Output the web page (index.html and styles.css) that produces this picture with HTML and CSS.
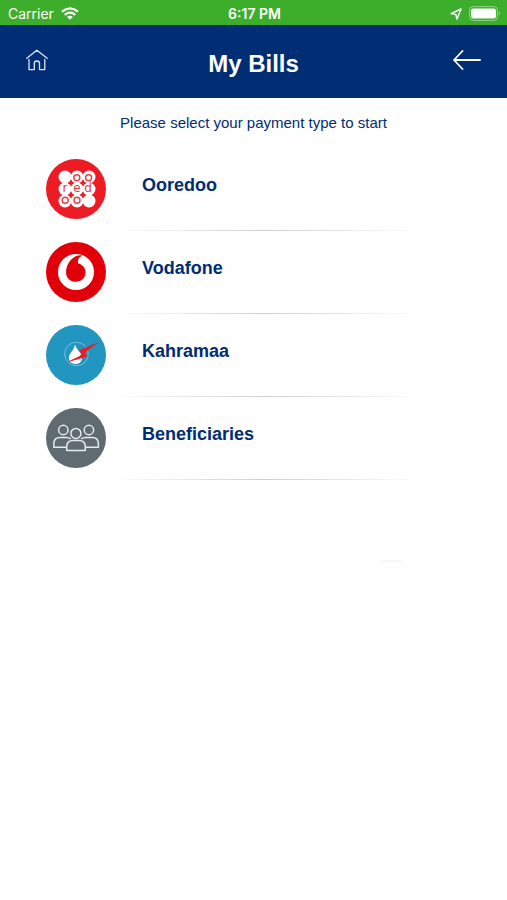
FILE: index.html
```html
<!DOCTYPE html>
<html lang="en">
<head>
<meta charset="utf-8">
<meta name="viewport" content="width=device-width, initial-scale=1">
<title>My Bills</title>
<link rel="stylesheet" href="styles.css">
</head>
<body>
<div class="status">
  <div class="status-left">
    <span>Carrier</span>
    <svg width="18" height="13" viewBox="0 0 18 13" fill="none" stroke="#fff" stroke-width="2.2" aria-hidden="true">
      <path d="M1 4.7Q9-1.8 17 4.7M3.7 7.8Q9 3.6 14.3 7.8"/>
      <path d="M6.1 9.8Q9 7.7 11.9 9.8L9 12.8Z" fill="#fff" stroke="none"/>
    </svg>
  </div>
  <span class="status-time">6:17 PM</span>
  <div class="status-right">
    <svg width="12" height="12" viewBox="0 0 12 12" fill="none" stroke="#fff" stroke-width="1.4" stroke-linejoin="round" aria-hidden="true">
      <path d="M11 1L1 5.6L5.8 6.4L7 11Z"/>
    </svg>
    <svg width="32" height="15" viewBox="0 0 32 15" aria-hidden="true">
      <rect x="0.6" y="0.6" width="27.8" height="13.8" rx="3.6" fill="none" stroke="#fff" stroke-opacity="0.45"/>
      <rect x="2" y="2.5" width="25" height="10" rx="2.2" fill="#fff"/>
      <path d="M30 5.3Q32 7.5 30 9.7Z" fill="#fff" fill-opacity="0.5"/>
    </svg>
  </div>
</div>
<header class="header">
  <button class="icon-button" type="button" aria-label="Home">
    <svg width="22" height="22" viewBox="0 0 22 22" fill="none" stroke="#dce6f8" stroke-width="1.3" stroke-linecap="round" stroke-linejoin="round" aria-hidden="true">
      <path d="M0.8 9.3L10.8 1.2L21.2 9.3M3 10.4V20.6H8.3V14.2Q8.3 12 10.9 12Q13.5 12 13.5 14.2V20.6H18.8V10.4"/>
    </svg>
  </button>
  <h1 class="title">My Bills</h1>
  <button class="icon-button icon-button-end" type="button" aria-label="Back">
    <svg width="28" height="20" viewBox="0 0 28 20" fill="none" stroke="#fff" stroke-width="1.8" stroke-linecap="round" stroke-linejoin="round" aria-hidden="true">
      <path d="M27 10H1M9.5 1L1 10L9.5 19"/>
    </svg>
  </button>
</header>
<main>
  <p class="hint">Please select your payment type to start</p>
  <ul class="bills">
    <li>
      <a class="bill" href="#ooredoo">
        <svg class="logo" viewBox="0 0 60 60" aria-hidden="true">
          <circle cx="30" cy="30" r="30" fill="#ed1c24"/>
          <g fill="#fff">
            <circle cx="19" cy="18" r="6.5"/><circle cx="31" cy="18" r="6.5"/><circle cx="43" cy="18" r="6.5"/>
            <circle cx="19" cy="30" r="6.5"/><circle cx="31" cy="30" r="6.5"/><circle cx="43" cy="30" r="6.5"/>
            <circle cx="19" cy="42" r="6.5"/><circle cx="31" cy="42" r="6.5"/><circle cx="43" cy="42" r="6.5"/>
          </g>
          <g fill="none" stroke="#ed3b42" stroke-width="1.4">
            <circle cx="30.8" cy="18.8" r="3"/><circle cx="42.6" cy="18.8" r="3"/>
            <circle cx="19.2" cy="41.2" r="3"/><circle cx="31" cy="41.2" r="3"/>
          </g>
          <g class="logo-letters">
            <text x="19" y="33">r</text><text x="31" y="33">e</text><text x="42" y="33">d</text>
          </g>
        </svg>
        <span class="name">Ooredoo</span>
      </a>
    </li>
    <li>
      <a class="bill" href="#vodafone">
        <svg class="logo" viewBox="0 0 60 60" aria-hidden="true">
          <circle cx="30" cy="30" r="30" fill="#e1000a"/>
          <circle cx="30" cy="30" r="18" fill="#fff"/>
          <path d="M35.5 13.2C28 12.5 20 20.5 20 30.2C20 36 24.3 39.8 29.8 39.8C35.4 39.8 39.5 35.8 39.5 30.3C39.5 25.6 36.2 22.4 32 21.2C31.5 17.5 33 15 36 13.8Z" fill="#e1000a"/>
        </svg>
        <span class="name">Vodafone</span>
      </a>
    </li>
    <li>
      <a class="bill" href="#kahramaa">
        <svg class="logo" viewBox="0 0 60 60" aria-hidden="true">
          <circle cx="30" cy="30" r="30" fill="#2196c1"/>
          <circle cx="30.5" cy="29" r="11.8" fill="none" stroke="#7fc0da" stroke-width="0.9"/>
          <path d="M29 19.6C30 24.5 36 27.5 36 33C36 36.8 33.2 39 29.6 39C26 39 22.8 36.8 22.8 33C22.8 28.4 28 25.6 29 19.6Z" fill="#fff"/>
          <path d="M53 17L32.8 25.2L35.6 29L33.2 31.2L19 38L41.8 31.6L39.2 28L41.8 25.6Z" fill="#ed1c24"/>
        </svg>
        <span class="name">Kahramaa</span>
      </a>
    </li>
    <li>
      <a class="bill" href="#beneficiaries">
        <svg class="logo" viewBox="0 0 60 60" aria-hidden="true">
          <circle cx="30" cy="30" r="30" fill="#5f6b70"/>
          <g fill="none" stroke="#e4e9eb" stroke-width="1.5" stroke-linejoin="round">
            <circle cx="17.3" cy="22" r="4.7"/><circle cx="42.9" cy="22" r="4.7"/><circle cx="29.9" cy="25.4" r="5"/>
            <path d="M20.5 39.3H7.8V36Q7.8 29.5 14 29.5H20.5Q23.3 29.5 24.8 31M39.6 39.3H52.4V36Q52.4 29.5 46.2 29.5H39.7Q36.8 29.5 35.2 31"/>
            <path d="M20.7 42.6V39Q20.7 32.6 27 32.6H33Q39.3 32.6 39.3 39V42.6Z"/>
          </g>
        </svg>
        <span class="name">Beneficiaries</span>
      </a>
    </li>
  </ul>
  <div class="end-mark"></div>
</main>
</body>
</html>
```
FILE: styles.css
```css
* {
  box-sizing: border-box;
}

body {
  margin: 0;
  background: #fefefe;
  color: #002d74;
  font-family: "Liberation Sans", Arial, sans-serif;
}

.status {
  display: grid;
  grid-template-columns: 1fr auto 1fr;
  align-items: center;
  height: 25px;
  padding: 2px 6px 0 8px;
  background: #3dae2b;
  color: #fff;
  font-family: Inter, sans-serif;
  font-size: 14px;
  line-height: 20px;
}

.status-left,
.status-right {
  display: flex;
  align-items: center;
  gap: 7px;
}

.status-right {
  justify-content: flex-end;
}

.status-time {
  font-weight: 600;
}

.header {
  display: grid;
  grid-template-columns: 1fr auto 1fr;
  align-items: center;
  height: 73px;
  padding: 0 26px;
  background: #002d74;
}

.icon-button {
  display: flex;
  justify-self: start;
  margin: 0 0 4px;
  padding: 0;
  border: 0;
  background: none;
  cursor: pointer;
}

.icon-button-end {
  justify-self: end;
}

.title {
  margin: 4px 0 0;
  color: #fff;
  font-size: 24px;
  line-height: 28px;
}

.hint {
  margin: 0;
  padding: 15px 16px 0;
  font-size: 15px;
  line-height: 20px;
  text-align: center;
}

.bills {
  margin: 0;
  padding: 15px 46px 0;
  list-style: none;
}

.bill {
  display: flex;
  align-items: center;
  gap: 36px;
  height: 83px;
  padding-bottom: 1px;
  background: linear-gradient(90deg, transparent, #cfcfcf, transparent) 68px 100% / 304px 1px no-repeat;
  color: inherit;
  text-decoration: none;
}

.logo {
  flex: none;
  width: 60px;
  height: 60px;
}

.logo-letters {
  fill: #ed3b42;
  font-family: "DejaVu Sans", sans-serif;
  font-size: 12px;
  text-anchor: middle;
}

.name {
  padding-bottom: 8px;
  font-size: 18px;
  font-weight: 700;
  line-height: 24px;
}

.end-mark {
  width: 22px;
  height: 2px;
  margin: 80px 105px 0 auto;
  background: #f7f7f7;
}
```
